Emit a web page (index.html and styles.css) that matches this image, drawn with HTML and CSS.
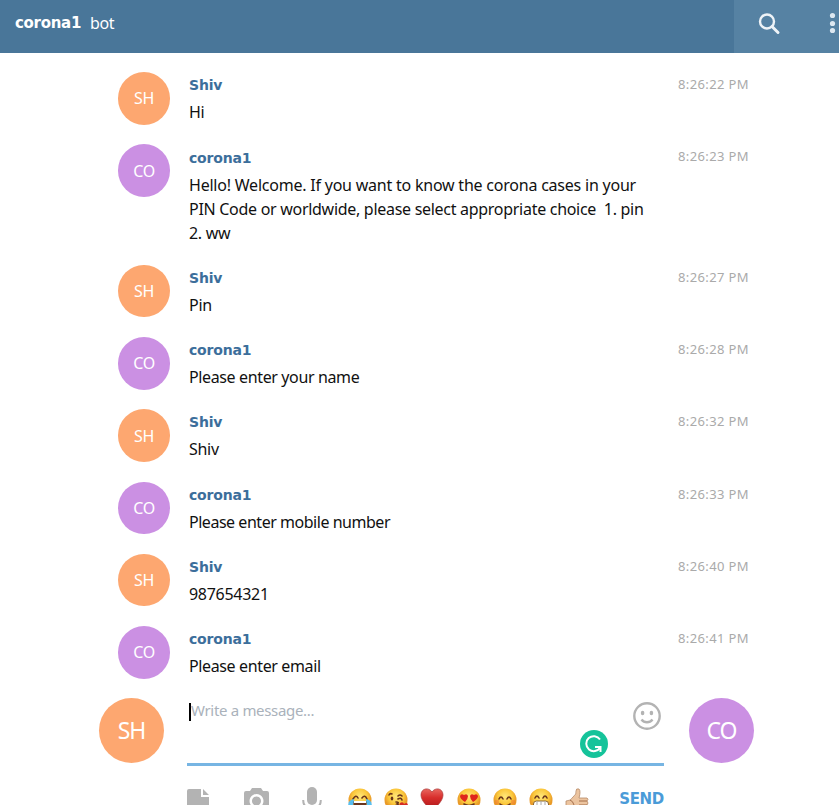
FILE: index.html
```html
<!DOCTYPE html>
<html lang="en">
<head>
<meta charset="utf-8">
<title>corona1 bot</title>
<link rel="stylesheet" href="styles.css">
</head>
<body>
<header class="header">
  <div class="peer"><b>corona1</b><span>bot</span></div>
  <div class="actions">
    <svg class="search" width="22" height="22" viewBox="0 0 22 22"><circle cx="8" cy="8.500" r="7"/><path d="M13 13.500l6 6"/></svg>
    <svg class="dots" width="6" height="22" viewBox="0 0 6 22"><circle cx="2.500" cy="2.500" r="2.600"/><circle cx="2.500" cy="10.500" r="2.600"/><circle cx="2.500" cy="17.500" r="2.600"/></svg>
  </div>
</header>
<main class="history">
  <article class="message"><div class="avatar user">SH</div><div class="body"><b class="name">Shiv</b><p>Hi</p></div><time>8:26:22 PM</time></article>
  <article class="message long"><div class="avatar bot">CO</div><div class="body"><b class="name">corona1</b><p><span class="wide">Hello! Welcome. If you want to know the corona cases in your</span><br>PIN Code or worldwide, please select appropriate choice&nbsp; 1. pin<br>2. ww</p></div><time>8:26:23 PM</time></article>
  <article class="message"><div class="avatar user">SH</div><div class="body"><b class="name">Shiv</b><p>Pin</p></div><time>8:26:27 PM</time></article>
  <article class="message"><div class="avatar bot">CO</div><div class="body"><b class="name">corona1</b><p class="tight">Please enter your name</p></div><time>8:26:28 PM</time></article>
  <article class="message"><div class="avatar user">SH</div><div class="body"><b class="name">Shiv</b><p>Shiv</p></div><time>8:26:32 PM</time></article>
  <article class="message"><div class="avatar bot">CO</div><div class="body"><b class="name">corona1</b><p class="tighter">Please enter mobile number</p></div><time>8:26:33 PM</time></article>
  <article class="message"><div class="avatar user">SH</div><div class="body"><b class="name">Shiv</b><p>987654321</p></div><time>8:26:40 PM</time></article>
  <article class="message"><div class="avatar bot">CO</div><div class="body"><b class="name">corona1</b><p class="tight">Please enter email</p></div><time>8:26:41 PM</time></article>
</main>
<footer class="composer">
  <div class="avatar large user">SH</div>
  <div class="compose">
    <div class="field">
      <i class="caret"></i><span class="placeholder">Write a message...</span>
      <svg class="smile" width="28" height="28" viewBox="0 0 28 28"><circle cx="14" cy="14" r="12.700"/><path d="M8.500 17.500c2.800 3.700 8.200 3.700 11 0"/><ellipse cx="9.600" cy="11" rx="1.800" ry="2.200"/><ellipse cx="18.400" cy="11" rx="1.800" ry="2.200"/></svg>
      <svg class="checker" width="28" height="28" viewBox="0 0 28 28"><circle cx="14" cy="14" r="14"/><path d="M20 9.500A7.500 7.500 0 1 0 20.200 17.500M15 17h5.500v5"/></svg>
    </div>
    <div class="toolbar">
      <svg class="tool" width="22" height="22" viewBox="0 0 22 22"><path d="M2 0h12v8h8v14H0V2q0-2 2-2zM16 0l6 6h-6z"/></svg>
      <svg class="tool camera" width="25" height="22" viewBox="0 0 25 22"><path fill-rule="evenodd" d="M8-1h9l2 3h4q2 0 2 2v18H0V4q0-2 2-2h4zM12.500 5a7 7 0 1 0 .01 0zM12.500 7.500a4.500 4.500 0 1 1-.01 0z"/></svg>
      <svg class="tool mic" width="20" height="24" viewBox="0 0 20 24"><rect x="5" y="0" width="10" height="18" rx="5"/><path class="stroke" d="M1.200 13q0 8.500 8.800 8.500t8.800-8.500"/></svg>
      <svg class="emoji e1" width="24" height="24" viewBox="0 0 24 24"><use href="#face"/><path class="brown" d="M5 11q3-5 5-1M14 10q3-4 5 1"/><path fill="#69341b" d="M5 13h14q0 8-7 8t-7-8"/><path fill="#fff" d="M6 13h12v2H6z"/><path fill="#58bff1" d="M6 11C1 12-1 15 1 20q4 3 5-9zm12 0c5 1 7 4 5 9q-4 3-5-9z"/></svg>
      <svg class="emoji" width="24" height="24" viewBox="0 0 24 24"><use href="#face"/><path class="brown" d="M5 7q1-2 3-1M14 8q2-2 4 0M14 11q3-2 4 1M12 14q4 0 1 2 3 1-1 3"/><ellipse cx="8" cy="10.500" rx="1.300" ry="2" fill="#69341b"/><path fill="#d52b25" d="M19 24q-5-6-3-9 3-2 4 1 4-3 4 2 0 3-5 6"/></svg>
      <svg class="emoji" width="24" height="24" viewBox="0 0 24 24"><path fill="url(#red)" stroke="#a83232" stroke-width=".7" d="M12 23C8 19 1 13 1 7 1 0 9-1 12 4c3-5 11-4 11 3 0 6-7 12-11 16z"/></svg>
      <svg class="emoji" width="24" height="24" viewBox="0 0 24 24"><use href="#face"/><path fill="#df251d" d="M8 14Q3 11 3 8q1-3 4-1 3-2 4 1 0 3-3 6zm8 0q5-3 5-6-1-3-4-1-3-2-4 1 0 3 3 6z"/><path class="brown" d="M7 16q5 3 10 0"/></svg>
      <svg class="emoji" width="24" height="24" viewBox="0 0 24 24"><use href="#face"/><path class="brown" d="M6 11q2-4 4 0M14 11q2-4 4 0M7 16q5 4 10 0"/><path fill="#f47b36" opacity=".45" d="M2 12h4v4H2zm16 0h4v4h-4z"/></svg>
      <svg class="emoji" width="24" height="24" viewBox="0 0 24 24"><use href="#face"/><path class="brown" d="M6 10q2-4 4 0M14 10q2-4 4 0"/><rect x="4.500" y="13" width="15" height="8" rx="3" fill="#fff" stroke="#8c642c"/><path stroke="#aaa" d="M8 13v8m4-8v8m4-8v8"/></svg>
      <svg class="emoji" width="24" height="24" viewBox="0 0 24 24"><path fill="#ecc49f" stroke="#b68a68" stroke-width=".8" d="M1 13q5 0 7-4 4-3 3-6 0-3 3-2 2 2 0 9h8q2 1 0 3 2 2 0 4v7H1z"/><path fill="none" stroke="#a46f4b" d="M14 13h8m-8 4h8M5 12q3 1 4 5"/></svg>
      <b class="send">SEND</b>
    </div>
  </div>
  <div class="avatar large bot">CO</div>
</footer>
<svg width="0" height="0"><defs><radialGradient id="yellow" cy=".35"><stop stop-color="#ffe77b"/><stop offset=".65" stop-color="#fbc83c"/><stop offset="1" stop-color="#e99a28"/></radialGradient><linearGradient id="red" x2="0" y2="1"><stop stop-color="#e9675f"/><stop offset=".4" stop-color="#d82e2c"/><stop offset="1" stop-color="#a41418"/></linearGradient><circle id="face" cx="12" cy="12" r="11.500" fill="url(#yellow)"/></defs></svg>
</body>
</html>
```
FILE: styles.css
```css
* { box-sizing: border-box; }
body { margin: 0; height: 805px; overflow: hidden; background: #fff; color: #111; font: 16px/24px Tahoma, "Noto Sans", sans-serif; }
svg { display: block; flex: none; overflow: visible; }
p { margin: 0; }
b, .name { font-family: Tahoma, "DejaVu Sans", sans-serif; }
.header { height: 53px; display: flex; justify-content: space-between; background: #497699; color: #fff; }
.peer { padding: 11px 15px; display: flex; gap: 9px; letter-spacing: -.4px; }
.peer b { font-size: 15px; letter-spacing: -.3px; }
.actions { width: 105px; padding: 13px 3px 0 25px; display: flex; justify-content: space-between; background: #5682a3; overflow: hidden; }
.search { fill: none; stroke: #eef3f7; stroke-width: 2.4; }
.search path { stroke-width: 3; stroke-linecap: round; }
.dots { fill: #dce7f0; }
.history { width: 630px; margin-left: 118px; padding-top: 19px; height: 642px; }
.message { height: 72.250px; display: grid; grid-template-columns: 71px 1fr 71px; }
.message.long { height: 120.500px; }
.message.long .body { padding-top: 1px; }
.avatar { width: 52px; height: 52.500px; border-radius: 50%; color: #fff; display: flex; align-items: center; justify-content: center; letter-spacing: -.4px; }
.user { background: #fda770; }
.bot { background: #cb90e3; }
.name { display: block; height: 28px; padding-top: 1px; color: #3c6e9b; font-size: 14px; letter-spacing: -.2px; }
.body p { white-space: nowrap; letter-spacing: -.29px; }
.body .wide { letter-spacing: -.22px; }
.body .tight { letter-spacing: -.37px; }
.body .tighter { letter-spacing: -.47px; }
time { color: #aaa; font-size: 13px; white-space: nowrap; letter-spacing: .38px; margin-left: 1px; }
.composer { display: flex; margin-left: 99px; padding-top: 3px; }
.large { width: 65px; height: 65px; font-size: 23px; letter-spacing: -1px; flex: none; padding-bottom: 2px; }
.compose { width: 477px; margin: 0 25px 0 23px; }
.field { height: 68px; position: relative; border-bottom: 3px solid #77b5e3; display: flex; padding: 5px 2px; }
.caret { width: 2px; height: 18px; background: #000; }
.placeholder { color: #aab2bb; font-size: 15px; line-height: 18px; letter-spacing: -.32px; margin-top: -2px; }
.smile { position: absolute; left: 446px; top: 3.500px; fill: none; stroke: #b3b3b3; stroke-width: 2.4; }
.smile ellipse { fill: #b3b3b3; stroke: none; }
.checker { position: absolute; left: 393px; top: 32px; }
.checker circle { fill: #15c39a; }
.checker path { fill: none; stroke: #fff; stroke-width: 2; }
.toolbar { height: 42px; padding-top: 23px; display: flex; align-items: flex-start; }
.tool { fill: #b3b3b3; }
.camera { margin-left: 35px; }
.mic { margin: -2px 0 0 33px; }
.stroke { fill: none; stroke: #b3b3b3; stroke-width: 2; }
.emoji { margin-right: 12.200px; margin-top: -1px; }
.e1 { margin-left: 26px; }
.brown { fill: none; stroke: #69341b; stroke-width: 1.6; stroke-linecap: round; }
.send { color: #4a9bd8; font-size: 15px; line-height: 18px; letter-spacing: -.3px; margin: 1px 0 0 auto; }
```
